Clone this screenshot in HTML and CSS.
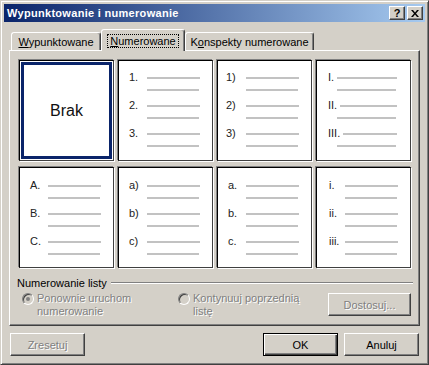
FILE: index.html
```html
<!DOCTYPE html>
<html lang="pl">
<head>
  <meta charset="UTF-8" />
  <title>Wypunktowanie i numerowanie</title>
  <link rel="stylesheet" href="styles.css">
</head>
<body>
  <div class="window">
    <div class="titlebar">
      <span class="title">Wypunktowanie i numerowanie</span>
      <div class="caption-buttons">
        <span class="cap-btn help">?</span>
        <span class="cap-btn">
          <svg width="8" height="7" viewBox="0 0 8 7"><path d="M0 0h2l2 2.4L6 0h2L5 3.5 8 7H6L4 4.6 2 7H0l3-3.5z" fill="#000"/></svg>
        </span>
      </div>
    </div>

    <div class="tabs">
      <div class="tab tab-bullets"><span><u>W</u>ypunktowane</span></div>
      <div class="tab tab-numbers active"><span class="focus"><u>N</u>umerowane</span></div>
      <div class="tab tab-outline"><span>K<u>o</u>nspekty numerowane</span></div>
    </div>

    <div class="panel">
      <div class="gallery">
        <div class="cell none">Brak</div>

        <div class="cell">
          <div class="item"><div class="row"><span class="num">1.</span><span class="line"></span></div><div class="line line2"></div></div>
          <div class="item"><div class="row"><span class="num">2.</span><span class="line"></span></div><div class="line line2"></div></div>
          <div class="item"><div class="row"><span class="num">3.</span><span class="line"></span></div><div class="line line2"></div></div>
        </div>

        <div class="cell narrow">
          <div class="item"><div class="row"><span class="num">1)</span><span class="line"></span></div><div class="line line2"></div></div>
          <div class="item"><div class="row"><span class="num">2)</span><span class="line"></span></div><div class="line line2"></div></div>
          <div class="item"><div class="row"><span class="num">3)</span><span class="line"></span></div><div class="line line2"></div></div>
        </div>

        <div class="cell roman">
          <div class="item"><div class="row"><span class="num">I.</span><span class="line"></span></div><div class="line line2"></div></div>
          <div class="item"><div class="row"><span class="num">II.</span><span class="line"></span></div><div class="line line2"></div></div>
          <div class="item"><div class="row"><span class="num">III.</span><span class="line"></span></div><div class="line line2"></div></div>
        </div>

        <div class="cell lower-row">
          <div class="item"><div class="row"><span class="num">A.</span><span class="line"></span></div><div class="line line2"></div></div>
          <div class="item"><div class="row"><span class="num">B.</span><span class="line"></span></div><div class="line line2"></div></div>
          <div class="item"><div class="row"><span class="num">C.</span><span class="line"></span></div><div class="line line2"></div></div>
        </div>

        <div class="cell lower-row">
          <div class="item"><div class="row"><span class="num">a)</span><span class="line"></span></div><div class="line line2"></div></div>
          <div class="item"><div class="row"><span class="num">b)</span><span class="line"></span></div><div class="line line2"></div></div>
          <div class="item"><div class="row"><span class="num">c)</span><span class="line"></span></div><div class="line line2"></div></div>
        </div>

        <div class="cell lower-row">
          <div class="item"><div class="row"><span class="num">a.</span><span class="line"></span></div><div class="line line2"></div></div>
          <div class="item"><div class="row"><span class="num">b.</span><span class="line"></span></div><div class="line line2"></div></div>
          <div class="item"><div class="row"><span class="num">c.</span><span class="line"></span></div><div class="line line2"></div></div>
        </div>

        <div class="cell lower-row shifted">
          <div class="item"><div class="row"><span class="num">i.</span><span class="line"></span></div><div class="line line2"></div></div>
          <div class="item"><div class="row"><span class="num">ii.</span><span class="line"></span></div><div class="line line2"></div></div>
          <div class="item"><div class="row"><span class="num">iii.</span><span class="line"></span></div><div class="line line2"></div></div>
        </div>
      </div>

      <div class="group">
        <span>Numerowanie listy</span>
        <span class="group-line"></span>
      </div>

      <div class="options">
        <div class="radio first">
          <span class="radio-box checked"></span>
          <span>Ponownie uruchom<br>numerowanie</span>
        </div>
        <div class="radio second">
          <span class="radio-box"></span>
          <span>Kontynuuj poprzednią<br>listę</span>
        </div>
        <button class="btn wide disabled">Dostosuj...</button>
      </div>
    </div>

    <div class="footer">
      <button class="btn disabled">Zresetuj</button>
      <div class="spacer"></div>
      <button class="btn default">OK</button>
      <button class="btn">Anuluj</button>
    </div>
  </div>
</body>
</html>
```

FILE: styles.css
```css
* {
  box-sizing: border-box;
}

body {
  margin: 0;
  background: #d4d0c8;
  font-family: "Liberation Sans", Arial, sans-serif;
  font-size: 11px;
  color: #000;
}

.window {
  width: 429px;
  height: 365px;
  border: 1px solid;
  border-color: #d4d0c8 #404040 #404040 #d4d0c8;
  padding: 3px;
  background: #d4d0c8;
  box-shadow: inset 1px 1px #fff, inset -1px -1px #808080;
  display: flex;
  flex-direction: column;
}

/* Title bar */
.titlebar {
  height: 18px;
  flex: none;
  display: flex;
  align-items: center;
  justify-content: space-between;
  padding: 0 2px 0 3px;
  background: linear-gradient(to right, #0a246a, #a6caf0);
}

.title {
  color: #fff;
  font-weight: bold;
  font-size: 11px;
  letter-spacing: 0.3px;
}

.caption-buttons {
  display: flex;
  gap: 2px;
}

.cap-btn {
  width: 16px;
  height: 14px;
  background: #d4d0c8;
  border: 1px solid;
  border-color: #fff #404040 #404040 #fff;
  box-shadow: inset -1px -1px #808080;
  display: flex;
  align-items: center;
  justify-content: center;
}

.cap-btn.help {
  font-weight: bold;
  font-size: 11px;
  line-height: 1;
}

/* Tabs */
.tabs {
  display: flex;
  align-items: flex-end;
  height: 21px;
  flex: none;
  margin: 7px 0 0 5px;
  padding-left: 2px;
  position: relative;
  z-index: 1;
}

.tab {
  height: 18px;
  background: #d4d0c8;
  border: 1px solid;
  border-bottom: none;
  border-color: #fff #404040 transparent #fff;
  border-radius: 3px 3px 0 0;
  box-shadow: inset -1px 0 #808080;
  display: flex;
  align-items: center;
  justify-content: center;
}

.tab-bullets { width: 90px; }
.tab-numbers { width: 84px; }
.tab-outline { width: 129px; }

.tab.active {
  height: 22px;
  margin-bottom: -1px;
  align-items: flex-start;
  padding-top: 4px;
  position: relative;
  z-index: 2;
}

.focus {
  line-height: 12px;
  padding: 0 2px;
  border: 1px dotted #000;
}

/* Panel */
.panel {
  height: 276px;
  flex: none;
  margin: 0 5px;
  padding: 9px 6px 0 9px;
  border: 1px solid;
  border-color: #fff #404040 #404040 #fff;
  box-shadow: inset -1px -1px #808080;
}

.gallery {
  display: grid;
  grid-template-columns: repeat(4, 95px);
  grid-template-rows: repeat(2, 101px);
  column-gap: 4px;
  row-gap: 6px;
}

.cell {
  background: #fff;
  border: 1px solid;
  border-color: #000 #404040 #404040 #000;
  box-shadow: -1px -1px #808080, 1px 1px #fff;
  padding-top: 10px;
}

.cell.lower-row {
  padding-top: 11px;
}

.cell.none {
  padding: 0;
  display: flex;
  align-items: center;
  justify-content: center;
  font-family: "Liberation Sans", Arial, sans-serif;
  font-size: 16px;
  color: #111;
  box-shadow: inset 0 0 0 1px #fff, inset 0 0 0 4px #0a246a, -1px -1px #808080, 1px 1px #fff;
}

.item {
  height: 28px;
}

.row {
  display: flex;
  align-items: center;
  width: 81px;
  height: 13px;
  padding-left: 10px;
}

.num {
  width: 18px;
  flex: none;
  line-height: 13px;
  color: #222;
}

.line {
  flex: 1;
  height: 2px;
  background: #c2c2c2;
}

.line2 {
  width: 52px;
  margin: 5px 0 0 28px;
}

.cell.narrow .row {
  padding-left: 8px;
}

.cell.narrow .num {
  width: 20px;
}

.cell.roman .row {
  width: 80px;
  padding-left: 11px;
}

.cell.roman .num {
  width: auto;
  min-width: 9px;
  padding-right: 3px;
}

.cell.roman .line2 {
  width: 59px;
  margin-left: 20px;
}

.cell.shifted .row {
  padding-left: 12px;
}

.cell.shifted .num {
  width: 16px;
}

/* Numbering group */
.group {
  display: flex;
  align-items: center;
  height: 13px;
  margin: 8px 0 0 -2px;
}

.group-line {
  flex: 1;
  height: 2px;
  margin-left: 4px;
  border-top: 1px solid #808080;
  border-bottom: 1px solid #fff;
}

.options {
  display: flex;
  align-items: flex-start;
  margin-top: 3px;
}

.radio {
  display: flex;
  align-items: flex-start;
  gap: 3px;
  line-height: 13px;
  color: #808080;
  text-shadow: 1px 1px #fff;
}

.radio.first {
  width: 156px;
  margin-left: 3px;
}

.radio.second {
  width: 150px;
}

.radio-box {
  width: 12px;
  height: 12px;
  flex: none;
  margin-top: 1px;
  border-radius: 50%;
  background: #d4d0c8;
  border: 1px solid;
  border-color: #808080 #fff #fff #808080;
  box-shadow: inset 1px 1px #404040;
  position: relative;
}

.radio-box.checked::after {
  content: "";
  position: absolute;
  left: 3px;
  top: 3px;
  width: 4px;
  height: 4px;
  border-radius: 50%;
  background: #808080;
}

/* Buttons */
.btn {
  width: 75px;
  height: 23px;
  padding: 0;
  background: #d4d0c8;
  border: 1px solid;
  border-color: #fff #404040 #404040 #fff;
  box-shadow: inset -1px -1px #808080;
  font-family: "Liberation Sans", Arial, sans-serif;
  font-size: 11px;
  color: #000;
  text-align: center;
}

.btn.wide {
  width: 83px;
  margin-top: 1px;
}

.btn.disabled {
  color: #808080;
  text-shadow: 1px 1px #fff;
}

.btn.default {
  border: 1px solid #000;
  box-shadow: inset 1px 1px #fff, inset -1px -1px #404040, inset -2px -2px #808080;
}

.footer {
  display: flex;
  gap: 6px;
  margin: 7px 6px 0 6px;
}

.spacer {
  flex: 1;
}
```
